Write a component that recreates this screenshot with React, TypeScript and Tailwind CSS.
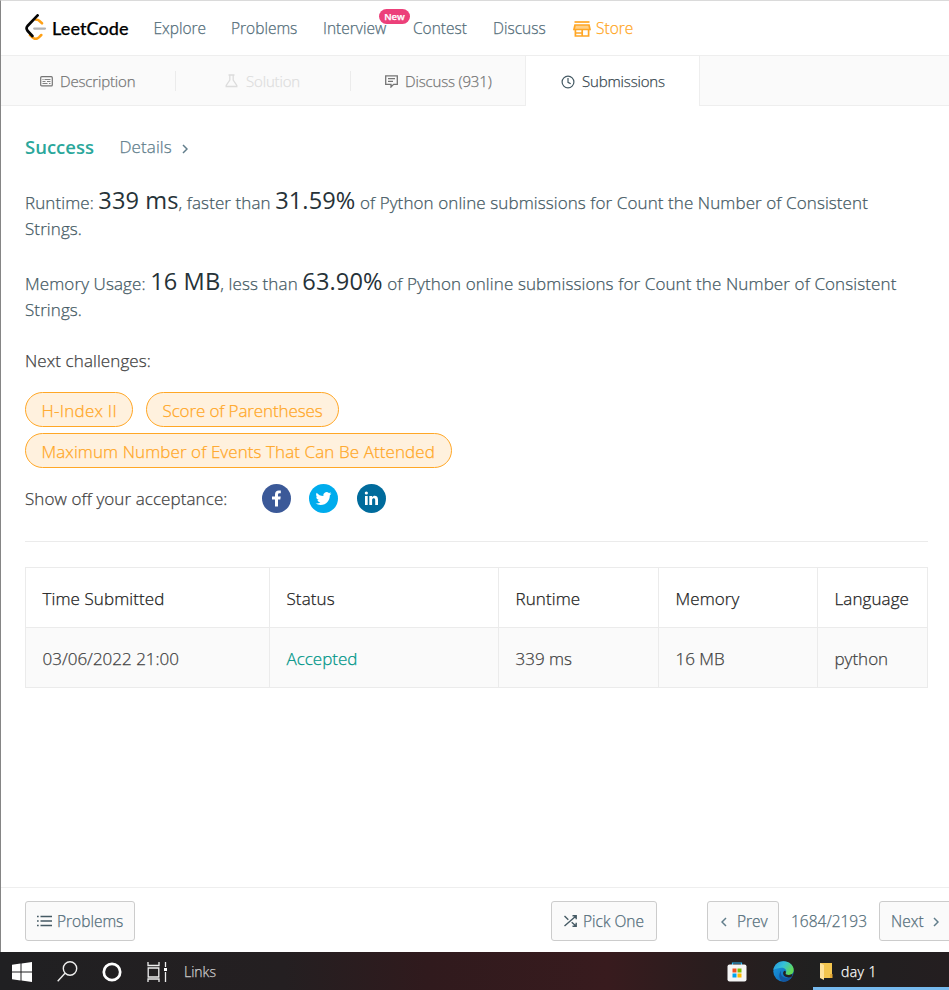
import React from "react";

const Tab = ({ children, className = "" }: { children: React.ReactNode; className?: string }) => (
  <div className={`flex h-[50px] shrink-0 items-center whitespace-nowrap border-b border-[#eee] pt-px text-[15px] tracking-[-0.16px] text-[#757575] ${className}`}>{children}</div>
);

const Divider = () => <div className="h-[50px] w-px border-b border-[#eee] pt-[15px]"><div className="h-5 bg-[#ebebeb]" /></div>;

const Logo = () => (
  <svg width="22" height="26" viewBox="0 0 22 26" fill="none" strokeLinecap="round" strokeLinejoin="round">
    <path d="M11 5.8C12.2 5.2 13.2 6 14.2 6.8L17 9.3M5 21.2l2.4 2.2c2 1.8 4.6 1.8 6.5 0l2.4-2.4" stroke="#ffa116" strokeWidth="2.5" />
    <path d="M9.2 14.6H20" stroke="#b3b3b3" strokeWidth="2.2" />
    <path d="M12.6 1.4L2.5 12c-1.2 1.5-1.2 3.2 0 4.8L7.4 22" stroke="#050505" strokeWidth="2.7" />
  </svg>
);

const Chevron = ({ left = false }: { left?: boolean }) => (
  <svg width="6" height="10" viewBox="0 0 6 10" fill="none" stroke="#607d8b" strokeWidth="1.5">
    <path d={left ? "M5 1L1 5l4 4" : "M1 1l4 4-4 4"} />
  </svg>
);

const Button = ({ children, className = "" }: { children: React.ReactNode; className?: string }) => (
  <button className={`flex h-10 shrink-0 items-center whitespace-nowrap rounded-[3px] border border-[#ccc] bg-[#fafafa] pt-px text-[15.5px] text-[#546e7a] ${className}`}>{children}</button>
);

const Pill = ({ children, className = "" }: { children: React.ReactNode; className?: string }) => (
  <span className={`flex h-[35px] items-center whitespace-nowrap rounded-full border border-[#ffa726] bg-[#fff1de] pl-[15.5px] pt-[3px] text-[17px] text-[#ffa726] ${className}`}>{children}</span>
);

const Row = ({ cells, className = "" }: { cells: string[]; className?: string }) => (
  <div className={`grid h-[60px] grid-cols-[244px_229px_160px_159px_110px] border-b border-[#ebebeb] ${className}`}>
    {cells.map((c) => (
      <div key={c} className={`flex items-center whitespace-nowrap border-r border-[#ebebeb] pl-[16.5px] pt-[3px] text-[17px] ${c === "Accepted" ? "text-[#009688]" : ""}`}>{c}</div>
    ))}
  </div>
);

const Figure = ({ children }: { children: string }) => (
  <span className="text-[23.6px] font-normal text-[#263238] [-webkit-text-stroke:0px]">{children}</span>
);

export default function App() {
  return (
    <div className="flex h-[990px] w-[949px] flex-col overflow-hidden bg-white font-['Open_Sans','Noto_Sans',sans-serif] font-light [-webkit-text-stroke:0.25px]">
      <div className="flex h-[952px] flex-col border-l border-t border-l-[#858585] border-t-[#dadada]">
        <nav className="flex h-[55px] shrink-0 items-center whitespace-nowrap border-b border-[#eee] pl-6 pt-0.5 text-[15.5px] text-[#546e7a]">
          <div className="flex w-[128.5px] items-center">
            <span className="-mt-1"><Logo /></span>
            <span className="-mt-0.5 ml-[5px] font-['Lato'] text-[18px] font-medium tracking-[0.1px] text-black">LeetCode</span>
          </div>
          <span className="w-[77.5px]">Explore</span>
          <span className="w-[92px]">Problems</span>
          <span className="relative w-[90px]">
            Interview
            <span className="absolute left-14 top-[-8px] flex h-[15px] w-[31px] items-center justify-center rounded-full bg-[#ec407a] text-[9.5px] font-semibold text-white">New</span>
          </span>
          <span className="w-20">Contest</span>
          <span className="w-20">Discuss</span>
          <svg width="18" height="16" viewBox="0 0 18 16" fill="none" stroke="#ffa726" strokeWidth="1.7">
            <path d="M1.5 1h15" /><path d="M2 4h14l1 4.5H1z" fill="#ffd089" /><path d="M2.4 8.5V15h13.2V8.5M9.2 9v6M2.4 12h6.8" />
          </svg>
          <span className="ml-[5px] text-[#ffa726]">Store</span>
        </nav>

        <div className="flex h-[50px] shrink-0 bg-[#fafafa]">
          <Tab className="w-[174px] pl-[39px]">
            <svg className="mr-[7px]" width="13" height="11" viewBox="0 0 13 11" fill="none" stroke="#757575" strokeWidth="1.2">
              <rect x=".7" y=".7" width="11.6" height="9.2" rx="1" /><path d="M2.5 3.5h1M4.5 3.5h6M2.5 5.5h3M7 5.5h3.5M2.5 7.5h5M9 7.5h1.5" strokeWidth=".9" />
            </svg>
            Description
          </Tab>
          <Divider />
          <Tab className="w-[174px] pl-[49px] !text-[#dedede]">
            <svg className="mr-2" width="13" height="14" viewBox="0 0 13 14" fill="none" stroke="#dcdcdc" strokeWidth="1.3">
              <path d="M3.5 1h6M4.8 1v5L1.2 11.5v1h10.6v-1L8.2 6V1" />
            </svg>
            Solution
          </Tab>
          <Divider />
          <Tab className="w-[174px] pl-[34px]">
            <svg className="mr-[7px]" width="13" height="13" viewBox="0 0 13 13" fill="none" stroke="#757575" strokeWidth="1.3">
              <path d="M.7 .8h11.6v8.6H8.6L6 12V9.4H.7zM3 3.7h7M3 6.3h5" />
            </svg>
            Discuss (931)
          </Tab>
          <Tab className="w-[175px] border-x !border-b-0 bg-white pl-[35px] !text-[#37474f]">
            <svg className="mr-[7px]" width="14" height="14" viewBox="0 0 14 14" fill="none" stroke="#455a64" strokeWidth="1.2">
              <circle cx="7" cy="7" r="5.9" /><path d="M7 3v4.3l2.7 1.5" />
            </svg>
            Submissions
          </Tab>
          <div className="flex-1 border-b border-[#eee]" />
        </div>

        <main className="flex-1 whitespace-nowrap pl-6 text-[17px] tracking-[0.09px] text-[#455a64]">
          <div className="mt-[27px] flex h-[28px] items-center">
            <span className="w-[94.5px] text-[18.5px] font-semibold tracking-normal text-[#2aa79b] [-webkit-text-stroke:0px]">Success</span>
            <span className="w-[62.5px] text-[#607d8b]">Details</span>
            <span className="pt-1"><Chevron /></span>
          </div>
          <p className="mt-[21px] h-[34px] leading-[36px]">Runtime: <Figure>339 ms</Figure>, faster than <Figure>31.59%</Figure> of Python online submissions for Count the Number of Consistent</p>
          <p className="h-[26px] leading-[26px]">Strings.</p>
          <p className="mt-[21px] h-[34px] leading-[36px] tracking-[0.11px]">Memory Usage: <Figure>16 MB</Figure>, less than <Figure>63.90%</Figure> of Python online submissions for Count the Number of Consistent</p>
          <p className="h-[26px] leading-[26px]">Strings.</p>
          <p className="mt-[25px] leading-[26px] text-[#424242]">Next challenges:</p>
          <div className="mt-[18px] flex gap-[13px]">
            <Pill className="w-[108px] tracking-[0.25px]">H-Index II</Pill>
            <Pill className="w-[193px] tracking-[-0.12px]">Score of Parentheses</Pill>
          </div>
          <Pill className="mt-1.5 w-[427px]">Maximum Number of Events That Can Be Attended</Pill>
          <div className="mt-4 flex h-[29px] items-center text-[#424242]">
            <span className="w-[237px]">Show off your acceptance:</span>
            <svg width="29" height="29" viewBox="0 0 29 29"><circle cx="14.5" cy="14.5" r="14.5" fill="#3b5998" /><path d="M13 22.5v-7h-3v-3h3v-2c0-2.6 1.5-4 3.8-4h2v2.8h-1.2c-1.3 0-1.6.6-1.6 1.5v1.7h2.7l-.4 3H16v7z" fill="#fff" /></svg>
            <svg className="ml-[18px]" width="29" height="29" viewBox="0 0 29 29"><circle cx="14.5" cy="14.5" r="14.5" fill="#00aced" /><path transform="translate(6.6 6.6) scale(.66)" d="M23.95 4.57a10 10 0 0 1-2.82.77 4.96 4.96 0 0 0 2.16-2.72c-.95.55-2 .95-3.13 1.18a4.92 4.92 0 0 0-8.38 4.48C7.69 8.1 4.07 6.13 1.64 3.16a4.9 4.9 0 0 0 1.52 6.57 4.9 4.9 0 0 1-2.23-.61v.06a4.92 4.92 0 0 0 3.95 4.83 5 5 0 0 1-2.21.08 4.94 4.94 0 0 0 4.6 3.42A9.87 9.87 0 0 1 0 19.54a14 14 0 0 0 7.55 2.21c9.05 0 14-7.5 14-13.98v-.64a9.9 9.9 0 0 0 2.4-2.56z" fill="#fff" /></svg>
            <svg className="ml-[19px]" width="29" height="29" viewBox="0 0 29 29"><circle cx="14.5" cy="14.5" r="14.5" fill="#006b9c" /><path d="M8 12h2.7v9H8zM12.3 12H15v1.3c1.5-2.4 6-2 6 2.1V21h-2.8v-5c0-2.5-3.1-2.3-3.1 0v5h-2.8z" fill="#fff" /><circle cx="9.35" cy="9" r="1.6" fill="#fff" /></svg>
          </div>
          <div className="mt-7 h-px w-[903px] bg-[#ebebeb]" />
          <div className="mt-[25px] w-[903px] border-l border-t border-[#ebebeb]">
            <Row className="text-[#212121]" cells={["Time Submitted", "Status", "Runtime", "Memory", "Language"]} />
            <Row className="bg-[#fafafa] tracking-normal text-[#424242]" cells={["03/06/2022 21:00", "Accepted", "339 ms", "16 MB", "python"]} />
          </div>
        </main>

        <footer className="flex h-[65px] shrink-0 border-t border-[#eee] pl-6 pt-[13px] text-[15.5px] text-[#546e7a]">
          <Button className="w-[110px] pl-[11px]">
            <svg className="-mt-0.5 mr-[5px]" width="15" height="12" viewBox="0 0 15 12" stroke="#455a64" strokeWidth="1.3"><path d="M0 1.5h1.7M3.5 1.5H15M0 6h1.7M3.5 6H15M0 10.5h1.7M3.5 10.5H15" /></svg>
            Problems
          </Button>
          <Button className="ml-[416px] w-[106px] pl-3">
            <svg className="-mt-0.5 mr-1.5" width="13" height="12" viewBox="0 0 13 12" fill="none" stroke="#455a64" strokeWidth="1.4"><path d="M.5 1l3.8 3.8M.5 11L12 1M7.7 7.3L12 11M8.5.8h3.7v3.4M8.5 11.2h3.7V7.8" /></svg>
            Pick One
          </Button>
          <Button className="ml-[50px] w-[72px] pl-[13px]"><Chevron left /><span className="ml-2.5">Prev</span></Button>
          <span className="ml-3 w-[88px] shrink-0 leading-[41px]">1684/2193</span>
          <Button className="w-[80px] pl-[11px]"><span className="w-[42px] text-left">Next</span><Chevron /></Button>
        </footer>
      </div>

      <div className="relative flex h-[38px] shrink-0 items-center bg-[linear-gradient(90deg,#202022_0%,#241f21_30%,#301a1d_45%,#381b1e_64%,#291d1e_75%,#202020_86%,#241e20_100%)] pl-3 pt-px text-[14px] text-[#ccc]">
        <svg width="20" height="20" viewBox="0 0 20 20" fill="#fff"><path d="M0 2.8L8.5 1.6V9.5H0zM9.5 1.5L20 0v9.5H9.5zM0 10.5h8.5v7.9L0 17.2zM9.5 10.5H20V20L9.5 18.5z" /></svg>
        <svg className="ml-[25px]" width="21" height="21" viewBox="0 0 21 21" fill="none" stroke="#eee" strokeWidth="1.4"><circle cx="13" cy="7.5" r="6.7" /><path d="M8 12.2L.7 20.2" /></svg>
        <svg className="ml-6" width="20" height="20" viewBox="0 0 20 20" fill="none" stroke="#fff" strokeWidth="2.7"><circle cx="10" cy="10" r="8.2" /></svg>
        <svg className="ml-[25px]" width="21" height="20" viewBox="0 0 21 20" fill="none" stroke="#eee" strokeWidth="1.3"><path d="M1 0v3.5h11V0M1.2 6h10.6v9H1.2zM1 20v-3h11v3M18.5 0v5M18.5 10v10" /><path d="M17 6h3v3h-3z" fill="#fff" stroke="none" /></svg>
        <span className="ml-4 w-[543px] shrink-0">Links</span>
        <svg width="20" height="20" viewBox="0 0 20 20"><path d="M5.5 3V1h9v2" fill="none" stroke="#29b6f6" strokeWidth="1.2" /><rect x=".5" y="2.5" width="19" height="17" rx="2" fill="#f5f5f5" /><path d="M5.5 6.5h4v4h-4z" fill="#f25022" /><path d="M10.5 6.5h4v4h-4z" fill="#7fba00" /><path d="M5.5 11.5h4v4h-4z" fill="#00a4ef" /><path d="M10.5 11.5h4v4h-4z" fill="#ffb900" /></svg>
        <svg className="ml-[26px]" width="21" height="21" viewBox="0 0 21 21">
          <defs>
            <linearGradient id="edgeTop" x1="0" y1="0" x2="1" y2=".5"><stop stopColor="#2493df" /><stop offset=".5" stopColor="#35c1d8" /><stop offset="1" stopColor="#62d955" /></linearGradient>
            <linearGradient id="edgeLow" x1="0" y1="0" x2="1" y2="1"><stop stopColor="#1b9de2" /><stop offset="1" stopColor="#0b5cad" /></linearGradient>
          </defs>
          <circle cx="10.5" cy="10.5" r="10.2" fill="url(#edgeLow)" />
          <path d="M.4 9C1.3 3.7 5.5.3 10.5.3c6 0 10.2 4.4 10.2 8.6 0 3-2.2 5-5 5-2.3 0-3.4-.8-3.1-1.7 2.2-3-1-6-4.6-5.5C4.5 7.1 1.5 8 .4 9z" fill="url(#edgeTop)" />
          <path d="M8.2 9.5c-1.5 4 1.5 8 6 7.4 2-.2 3.3-.8 4.7-1.5-2 3.6-5.2 5.3-8.4 5.3-4.3-.9-5.7-7.5-2.3-11.2z" fill="#1456a0" />
          <path d="M12.6 12.2c-.3.9.8 1.7 3.1 1.7 1.4 0 2.7-.4 3.8-1.4l-.4 2.8c-3.5 2.5-8.7.7-9-3 0-1.2.6-2.3 1.8-2.6 1 .4 1.2 1.5.7 2.5z" fill="#262021" />
        </svg>
        <svg className="ml-[26px]" width="13" height="17" viewBox="0 0 13 17"><path d="M0 0h12v15H2z" fill="#f4c64f" /><path d="M0 0l4 2v15l-4-2z" fill="#ffe29a" /><path d="M10 11h2.5v4H10z" fill="#e5a936" /></svg>
        <span className="ml-2 tracking-[0.4px] text-white">day 1</span>
        <div className="absolute bottom-0 right-0 h-[3px] w-[136px] bg-[#76b9ed]" />
      </div>
    </div>
  );
}
